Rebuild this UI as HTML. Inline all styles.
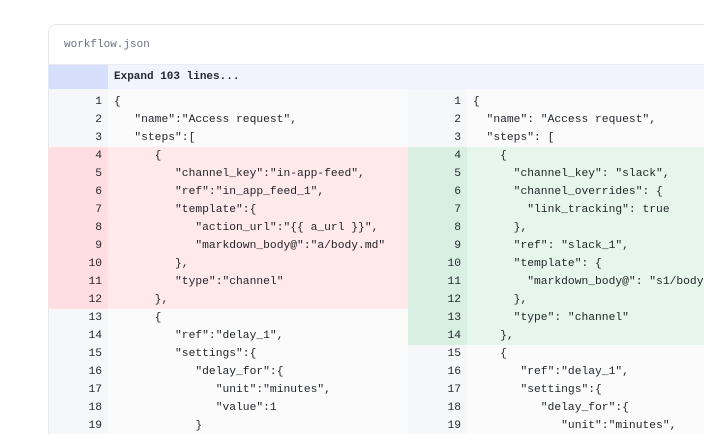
<!DOCTYPE html><html><head><style>
html,body{margin:0;width:704px;height:434px;overflow:hidden}
body{position:relative;background:#fff;font-family:"Liberation Mono",monospace;font-size:11.3px;color:#1f2328}
.card{position:absolute;left:48px;top:24px;width:700px;height:409px;border:1px solid #e5e7eb;border-bottom:none;border-radius:8px 8px 0 0;overflow:hidden}
.hdr{height:39px;line-height:40px;padding-left:15px;color:#6b7280;font-size:11px}
.exp{height:24px;background:#f1f4fd;display:flex;border-top:1px solid #e8ebf3;border-bottom:1px dotted #d8dce6}
.exp .g{width:59px;background:#d5defb}
.exp .t{padding-left:6px;line-height:24px;font-weight:bold;font-size:11px;color:#24292f}
.pane{position:absolute;overflow:hidden;height:345px}
.r{height:18px;line-height:18px;display:flex;white-space:pre}
.n{width:53px;flex:none;text-align:right;padding-right:6px;background:#f6f7f9;color:#24292f}
.c{padding-left:6px;background:#fbfbfc;flex:1;min-width:0;overflow:hidden}
.d .n{background:#ffdde1}.d .c{background:#ffe9eb}
.a .n{background:#d8efe1}.a .c{background:#e7f6ec}
</style></head><body>
<div class="card">
<div class="hdr">workflow.json</div>
<div class="exp"><div class="g"></div><div class="t">Expand 103 lines...</div></div>
</div>
<div class="pane" style="left:49px;top:89px;width:359px">
<div class="r" style="height:4px"><div class="n"></div><div class="c"></div></div>
<div class="r"><div class="n">1</div><div class="c">{</div></div>
<div class="r"><div class="n">2</div><div class="c">   "name":"Access request",</div></div>
<div class="r"><div class="n">3</div><div class="c">   "steps":[</div></div>
<div class="r d"><div class="n">4</div><div class="c">      {</div></div>
<div class="r d"><div class="n">5</div><div class="c">         "channel_key":"in-app-feed",</div></div>
<div class="r d"><div class="n">6</div><div class="c">         "ref":"in_app_feed_1",</div></div>
<div class="r d"><div class="n">7</div><div class="c">         "template":{</div></div>
<div class="r d"><div class="n">8</div><div class="c">            "action_url":"{{ a_url }}",</div></div>
<div class="r d"><div class="n">9</div><div class="c">            "markdown_body@":"a/body.md"</div></div>
<div class="r d"><div class="n">10</div><div class="c">         },</div></div>
<div class="r d"><div class="n">11</div><div class="c">         "type":"channel"</div></div>
<div class="r d"><div class="n">12</div><div class="c">      },</div></div>
<div class="r"><div class="n">13</div><div class="c">      {</div></div>
<div class="r"><div class="n">14</div><div class="c">         "ref":"delay_1",</div></div>
<div class="r"><div class="n">15</div><div class="c">         "settings":{</div></div>
<div class="r"><div class="n">16</div><div class="c">            "delay_for":{</div></div>
<div class="r"><div class="n">17</div><div class="c">               "unit":"minutes",</div></div>
<div class="r"><div class="n">18</div><div class="c">               "value":1</div></div>
<div class="r"><div class="n">19</div><div class="c">            }</div></div>
</div>
<div class="pane" style="left:408px;top:89px;width:296px">
<div class="r" style="height:4px"><div class="n"></div><div class="c"></div></div>
<div class="r"><div class="n">1</div><div class="c">{</div></div>
<div class="r"><div class="n">2</div><div class="c">  "name": "Access request",</div></div>
<div class="r"><div class="n">3</div><div class="c">  "steps": [</div></div>
<div class="r a"><div class="n">4</div><div class="c">    {</div></div>
<div class="r a"><div class="n">5</div><div class="c">      "channel_key": "slack",</div></div>
<div class="r a"><div class="n">6</div><div class="c">      "channel_overrides": {</div></div>
<div class="r a"><div class="n">7</div><div class="c">        "link_tracking": true</div></div>
<div class="r a"><div class="n">8</div><div class="c">      },</div></div>
<div class="r a"><div class="n">9</div><div class="c">      "ref": "slack_1",</div></div>
<div class="r a"><div class="n">10</div><div class="c">      "template": {</div></div>
<div class="r a"><div class="n">11</div><div class="c">        "markdown_body@": "s1/body.md"</div></div>
<div class="r a"><div class="n">12</div><div class="c">      },</div></div>
<div class="r a"><div class="n">13</div><div class="c">      "type": "channel"</div></div>
<div class="r a"><div class="n">14</div><div class="c">    },</div></div>
<div class="r"><div class="n">15</div><div class="c">    {</div></div>
<div class="r"><div class="n">16</div><div class="c">       "ref":"delay_1",</div></div>
<div class="r"><div class="n">17</div><div class="c">       "settings":{</div></div>
<div class="r"><div class="n">18</div><div class="c">          "delay_for":{</div></div>
<div class="r"><div class="n">19</div><div class="c">             "unit":"minutes",</div></div>
</div>
</body></html>
